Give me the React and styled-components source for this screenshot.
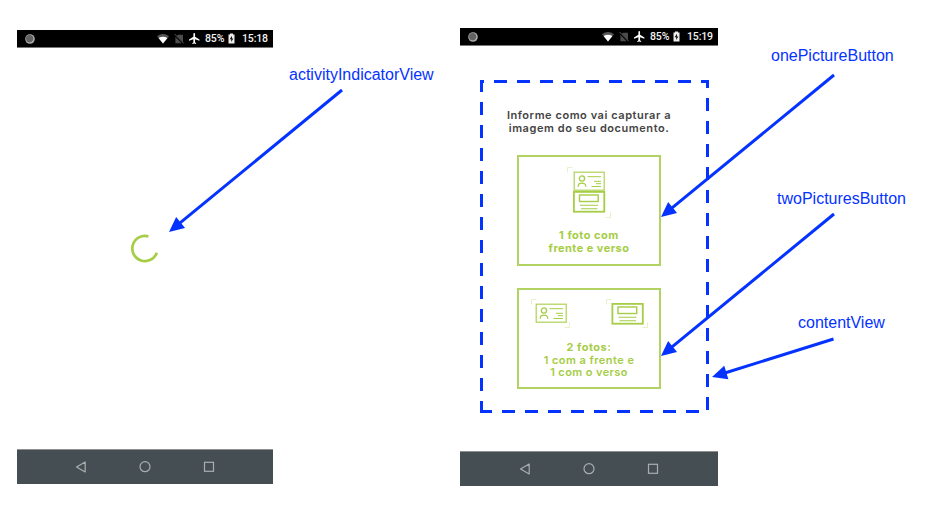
import React from "react";
import styled, { createGlobalStyle } from "styled-components";

const BLUE = "#0433ff";
const GREEN = "#a5cd45";

const GlobalStyle = createGlobalStyle`
  body { margin: 0; background: #fff; overflow: hidden; }
`;

const Diagram = styled.main`
  position: relative;
  display: flex;
  align-items: flex-start;
  gap: 187px;
  box-sizing: border-box;
  width: 944px;
  height: 509px;
  padding: 28px 0 0 17px;
`;

const Phone = styled.section`
  display: flex;
  flex-direction: column;
  width: ${(p) => p.$width}px;
  height: ${(p) => p.$height}px;
  margin-top: ${(p) => p.$drop || 0}px;
`;

const StatusBar = styled.header`
  display: flex;
  align-items: center;
  box-sizing: border-box;
  height: 18px;
  flex: none;
  padding: 0 5px 0 8px;
  background: #000;
  border-bottom: 1px solid #777;
`;

const StatusIcon = styled.svg`
  flex: none;
  margin-left: ${(p) => p.$gap || 0}px;
`;

const Spacer = styled.div`
  flex: 1;
`;

const StatusText = styled.span`
  font: 500 10.5px/16px Roboto, sans-serif;
  letter-spacing: ${(p) => p.$spacing || 0}px;
  width: ${(p) => p.$width}px;
  margin-left: ${(p) => p.$gap}px;
  padding-top: 1px;
  white-space: nowrap;
  color: #f2f2f2;
`;

const Screen = styled.div`
  flex: 1;
  display: flex;
  flex-direction: column;
  align-items: center;
`;

const LoadingScreen = styled(Screen)`
  justify-content: center;
`;

const NavBar = styled.footer`
  display: flex;
  justify-content: center;
  align-items: center;
  gap: 50px;
  box-sizing: border-box;
  height: 35px;
  flex: none;
  background: #454e53;
  border-top: 1px solid #8d9190;
`;

const Prompt = styled.h1`
  margin: 63px 0 0;
  font: 600 11px/12.5px Inter, sans-serif;
  text-align: center;
  color: #444;
`;

const Line = styled.span`
  display: block;
  white-space: nowrap;
  letter-spacing: ${(p) => p.$spacing || 0}px;
`;

const Choice = styled.button`
  display: flex;
  flex-direction: column;
  align-items: center;
  box-sizing: border-box;
  width: 144px;
  height: ${(p) => p.$height}px;
  margin: ${(p) => p.$top}px 0 0;
  padding: ${(p) => p.$pad}px 0 0;
  background: #fff;
  border: 2px solid #b2d364;
  color: ${GREEN};
`;

const ChoiceText = styled.span`
  margin-top: ${(p) => p.$top}px;
  font: 700 11px/12.6px Inter, sans-serif;
  text-align: center;
`;

const MediumLine = styled(Line)`
  font-weight: 600;
`;

const CardPair = styled.div`
  display: flex;
  gap: 36px;
  margin-left: 2px;
`;

const Overlay = styled.svg`
  position: absolute;
  inset: 0;
  pointer-events: none;
`;

const Label = styled.span`
  position: absolute;
  left: ${(p) => p.$x}px;
  top: ${(p) => p.$y}px;
  font: 16px/18px "Liberation Sans", Arial, sans-serif;
  white-space: nowrap;
  color: ${BLUE};
`;

function Status({ time }) {
  return (
    <StatusBar>
      <StatusIcon width="10" height="10" viewBox="0 0 10 10">
        <circle cx="5" cy="5" r="4.8" fill="#aaa" />
        <circle cx="4.6" cy="4.6" r="3.6" fill="#626262" />
      </StatusIcon>
      <Spacer />
      <StatusIcon width="12" height="10" viewBox="0 0 12 10">
        <path d="M0 2.2Q6-2.2 12 2.2L6 9.6Z" fill="#555" />
        <path d="M1.600 4.100Q6 1.200 10.400 4.100L6 9.6Z" fill="#fff" />
      </StatusIcon>
      <StatusIcon $gap={5} width="10" height="10" viewBox="0 0 10 10">
        <path d="M4 .7H9V9.3H1.4V3.4Z" fill="#4c4c4c" />
        <path d="M0 .3 9.3 9.7" stroke="#000" strokeWidth="1.8" />
        <path d="M.6 0 9.8 9.4" stroke="#626262" strokeWidth=".9" />
      </StatusIcon>
      <StatusIcon $gap={5} width="11" height="11" viewBox="2 2 20 20">
        <path
          d="M21 16v-2l-8-5V3.5c0-.83-.67-1.5-1.5-1.5S10 2.67 10 3.5V9l-8 5v2l8-2.5V19l-2 1.5V22l3.5-1 3.5 1v-1.5L13 19v-5.5l8 2.5z"
          fill="#fff"
        />
      </StatusIcon>
      <StatusText $gap={5} $width={19} $spacing={-0.15}>85%</StatusText>
      <StatusIcon $gap={4} width="7" height="11" viewBox="0 0 7 11">
        <path d="M2 .5H5V1.5H6.5V10.5H.5V1.5H2Z" fill="#eee" />
        <path d="M4 2.8 1.7 6.3H3.2V9L5.4 5.5H4Z" fill="#111" />
      </StatusIcon>
      <StatusText $gap={7} $width={26} $spacing={-0.15}>{time}</StatusText>
    </StatusBar>
  );
}

function Navigation() {
  const shape = { fill: "none", stroke: "#a9afb0", strokeWidth: 1.2 };
  return (
    <NavBar>
      <svg width="14" height="14" viewBox="0 0 14 14">
        <path d="M11.2 2V12L2.500 7Z" {...shape} strokeLinejoin="round" />
      </svg>
      <svg width="14" height="14" viewBox="0 0 14 14">
        <circle cx="7" cy="6.700" r="5" {...shape} />
      </svg>
      <svg width="14" height="14" viewBox="0 0 14 14">
        <rect x="2.500" y="2.300" width="9" height="9" {...shape} />
      </svg>
    </NavBar>
  );
}

function FrontArt() {
  return (
    <g fill="none" stroke={GREEN}>
      <rect x=".7" y=".7" width="30" height="18" strokeWidth="1.2" opacity=".9" />
      <circle cx="8.5" cy="7" r="2.6" strokeWidth="1.3" />
      <path d="M4.8 15.2V14.3C4.8 10.6 12.2 10.6 12.2 14.3V15.2" strokeWidth="1.3" />
      <path d="M14 5.2H27.5M20.5 9.8H27.5M22.5 12.2H27.5M18 15H27.5" strokeWidth="1" />
    </g>
  );
}

function BackArt() {
  return (
    <g fill="none" stroke={GREEN}>
      <rect x=".9" y=".9" width="30.4" height="19.8" strokeWidth="1.8" />
      <rect x="6.5" y="4" width="18.700" height="6.5" strokeWidth="1.4" />
      <path d="M7 14.2H25M8 17.7H24.5" strokeWidth="1.1" />
    </g>
  );
}

function Corners({ width, height }) {
  return (
    <path
      d={`M.5 5.5V.5H5.5M${width - 5.5} ${height - 0.5}H${width - 0.5}V${height - 5.5}`}
      fill="none"
      stroke="#e6f1cb"
    />
  );
}

function Arrow({ from, to }) {
  const angle = Math.atan2(to[1] - from[1], to[0] - from[0]);
  const length = Math.hypot(to[0] - from[0], to[1] - from[1]);
  return (
    <g transform={`translate(${from[0]} ${from[1]}) rotate(${(angle * 180) / Math.PI})`}>
      <path d={`M0 0H${length - 10}`} stroke={BLUE} strokeWidth="3" />
      <path d={`M${length} 0L${length - 15} -7V7Z`} fill={BLUE} />
    </g>
  );
}

export default function App() {
  return (
    <>
      <GlobalStyle />
      <Diagram>
        <Phone $width={256} $height={454} $drop={2}>
          <Status time="15:18" />
          <LoadingScreen>
            <svg width="30" height="30" viewBox="0 0 30 30">
              <path d="M18.4 2.4A12.6 12.6 0 1 0 26.8 18.7" fill="none" stroke={GREEN} strokeWidth="2.7" />
            </svg>
          </LoadingScreen>
          <Navigation />
        </Phone>

        <Phone $width={258} $height={458}>
          <Status time="15:19" />
          <Screen>
            <Prompt>
              <Line $spacing={0.55}>Informe como vai capturar a</Line>
              <Line $spacing={0.55}>imagem do seu documento.</Line>
            </Prompt>
            <Choice $height={111} $top={21} $pad={10}>
              <svg width="44" height="52" viewBox="0 0 44 52">
                <Corners width={44} height={51} />
                <g transform="translate(6.500 4.500)"><FrontArt /></g>
                <g transform="translate(6 24)"><BackArt /></g>
              </svg>
              <ChoiceText $top={10}>
                <Line $spacing={0.5}>1 foto com</Line>
                <Line $spacing={0.45}>frente e verso</Line>
              </ChoiceText>
            </Choice>
            <Choice $height={101} $top={22} $pad={9}>
              <CardPair>
                <svg width="39" height="29" viewBox="0 0 39 29">
                  <Corners width={39} height={29} />
                  <g transform="translate(4.5 4.5)"><FrontArt /></g>
                </svg>
                <svg width="43" height="29" viewBox="0 0 43 29">
                  <Corners width={42} height={29} />
                  <g transform="translate(5.500 4)"><BackArt /></g>
                </svg>
              </CardPair>
              <ChoiceText $top={13}>
                <Line $spacing={0.5}>2 fotos:</Line>
                <MediumLine $spacing={0.45}>1 com a frente e</MediumLine>
                <MediumLine $spacing={0.4}>1 com o verso</MediumLine>
              </ChoiceText>
            </Choice>
          </Screen>
          <Navigation />
        </Phone>

        <Overlay width="944" height="509">
          <path
            d="M481.5 411.5V81.5H707.5V411.5Z"
            fill="none"
            stroke={BLUE}
            strokeWidth="3"
            strokeDasharray="13 10"
            strokeDashoffset="2.5"
          />
          <Arrow from={[342, 90]} to={[169, 232]} />
          <Arrow from={[834, 75]} to={[661, 217]} />
          <Arrow from={[834, 214]} to={[661, 356]} />
          <Arrow from={[833.5, 339]} to={[712, 377]} />
        </Overlay>
        <Label $x={289} $y={66}>activityIndicatorView</Label>
        <Label $x={771} $y={47}>onePictureButton</Label>
        <Label $x={777} $y={190}>twoPicturesButton</Label>
        <Label $x={798} $y={314}>contentView</Label>
      </Diagram>
    </>
  );
}
